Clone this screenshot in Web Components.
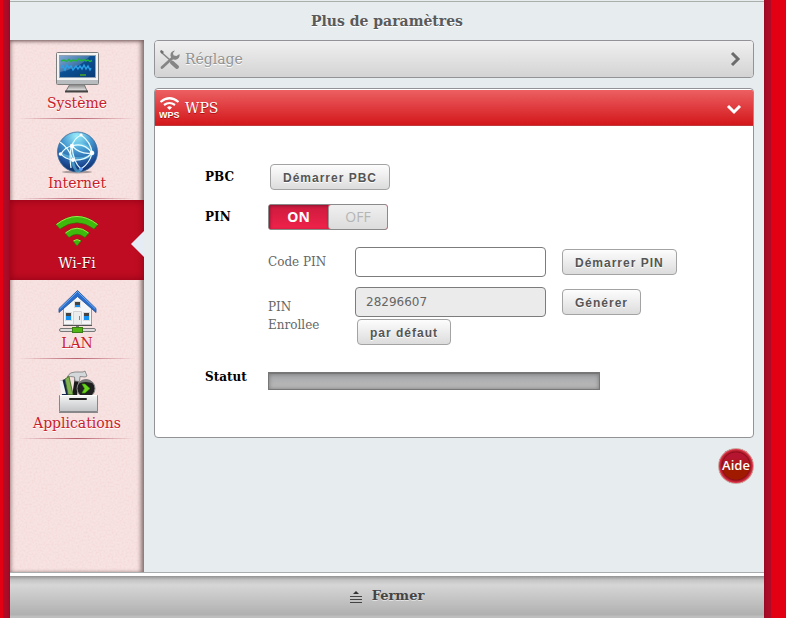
<!DOCTYPE html>
<html lang="fr">
<head>
<meta charset="utf-8">
<title>Plus de paramètres</title>
<style>
html, body { margin: 0; min-height: 100%; }
body { background: #e20012; font-family: "DejaVu Serif", serif; color: #4d4d4d; }
</style>
</head>
<body>
<app-shell>
  <side-nav slot="nav">
    <nav-item label="Système"><svg width="48" height="48" viewBox="0 0 48 48">
      <defs><linearGradient id="scr" x1="0" y1="0" x2="1" y2="1"><stop offset="0" stop-color="#5f93c8"/><stop offset=".45" stop-color="#0b4f92"/><stop offset="1" stop-color="#0a3c78"/></linearGradient>
      <linearGradient id="std" x1="0" y1="0" x2="0" y2="1"><stop offset="0" stop-color="#777"/><stop offset="1" stop-color="#eee"/></linearGradient></defs>
      <path d="M17 36h14l3 7H13z" fill="url(#std)" stroke="#777"/><path d="M12 43.500h23" stroke="#444" stroke-width="2"/>
      <rect x="3.500" y="4.500" width="42" height="32" rx="1" fill="#f4f4f4" stroke="#7d7d7d"/>
      <path d="M4 32h41v4H4z" fill="#b9bcbe"/>
      <rect x="6.500" y="7.500" width="36" height="22" fill="url(#scr)" stroke="#8fa1b3"/>
      <path d="M7 8h30Q27 20 7 24z" fill="#fff" opacity=".22"/>
      <path d="M8 13l3-1 2 1.500 3-2 2 2 2-1.500 3 1 3-2 2 2 3-1.500 2 1.500 2-1 2 1.500 2-1" fill="none" stroke="#21b53a" stroke-width="1.400"/>
      <path d="M8 20l2-2 2 4 2-5 2 3 2-2 2 4 3-4 2 3 2-3 2 3 2-4 2 4 2-3 2 4 1-2" fill="none" stroke="#29a0e8" stroke-width="1.400"/>
      <path d="M27 27h6" stroke="#3a8d3a" stroke-width="2"/></svg></nav-item>
    <nav-item label="Internet"><svg width="48" height="48" viewBox="0 0 48 48">
      <defs><radialGradient id="gl" cx=".48" cy=".1" r=".9"><stop offset="0" stop-color="#9beefa"/><stop offset=".4" stop-color="#479bd2"/><stop offset=".8" stop-color="#1e4e98"/><stop offset="1" stop-color="#0f2c66"/></radialGradient></defs>
      <ellipse cx="24" cy="44" rx="15" ry="1.500" fill="#000" opacity=".3"/>
      <circle cx="24.500" cy="24" r="20" fill="url(#gl)" stroke="#3b6c9c" stroke-width=".8"/>
      <g fill="none" stroke="#6ed8f4" stroke-width="3" opacity=".5"><path d="M19 18Q32 13 40 25Q30 36 8 26"/><path d="M28 7Q15 16 19 32T28 41"/></g>
      <g fill="none" stroke="#e9fcff" stroke-width="1.200"><path d="M19 18Q31 14 39 25Q32 33 20 32Q12 31 8 26"/><path d="M28 7Q14 14 18 40"/><path d="M28 7Q38 14 39 25Q37 35 28 41"/><path d="M19 18Q20 34 28 41"/><path d="M7 14Q16 20 20 32"/><path d="M19 18Q28 27 39 25"/><path d="M19 18Q12 19 8 26"/></g>
      <g fill="#fff"><circle cx="19" cy="18" r="2.200"/><circle cx="39" cy="25" r="2.200"/><circle cx="20" cy="32" r="2"/><circle cx="7.500" cy="26" r="1.800"/><circle cx="28" cy="7" r="1.600"/></g><circle cx="28" cy="41" r="1.800" fill="#67a6ff"/></svg></nav-item>
    <nav-item label="Wi-Fi" active><svg width="48" height="48" viewBox="0 0 48 48">
      <g fill="#3fb90c" stroke="#1f7a05" stroke-width=".6"><path d="M3 16.500Q24 0 45 16.500L41 21Q24 8.500 7 21z"/><path d="M12 25Q24 15 36 25L32 29.500Q24 23 16 29.500z"/><path d="M20 33Q24 30 28 33L24 38z"/></g>
      <g fill="none" stroke="#a2ea4c" stroke-width="1"><path d="M3.500 16.500Q24 .5 44.500 16.500"/><path d="M12.500 24.900Q24 15.500 35.500 24.900"/><path d="M20.500 32.800Q24 30.500 27.500 32.800"/></g></svg></nav-item>
    <nav-item label="LAN"><svg width="48" height="48" viewBox="0 0 48 48">
      <path d="M10.500 20L24.500 6l14 14v17h-28z" fill="#f5f6f7" stroke="#999"/><path d="M10 37.500h29" stroke="#555"/>
      <path d="M6 20.500L24.500 2.500 43 20.500v4L24.500 8.500 6 24.500z" fill="#2b6fce" stroke="#1c4c95" stroke-width=".8"/><path d="M6.500 21L24.500 3.500 42.500 21" fill="none" stroke="#74adef"/>
      <g fill="#444" stroke="#ddd"><path d="M21.500 13.500h6v6h-6z"/><path d="M12.500 24.500h6v8h-6z"/><path d="M30.500 24.500h6v8h-6z"/></g>
      <path d="M22 17h5v2h-5zM13 28h5v4h-5zM31 28h5v4h-5z" fill="#1690f0"/>
      <path d="M20.500 23.500h8v13h-8z" fill="#eceded" stroke="#d2d2d2"/><path d="M26.500 28v4" stroke="#888"/>
      <path d="M24.500 38v3" stroke="#777" stroke-width="3"/>
      <rect x="6.500" y="40.500" width="36" height="3" rx="1.500" fill="#dedede" stroke="#777"/><rect x="19.500" y="39.500" width="10" height="5" fill="#52b516" stroke="#3b7c16"/></svg></nav-item>
    <nav-item label="Applications"><svg width="48" height="48" viewBox="0 0 48 48">
      <defs><linearGradient id="bx" x1="0" y1="0" x2="0" y2="1"><stop offset="0" stop-color="#f4f4f4"/><stop offset="1" stop-color="#c2c4c6"/></linearGradient></defs>
      <path d="M22 9l4 1-2 18h-5z" fill="#1b1b1b"/><path d="M14 9Q17 3.500 22 4h8l2-1 2 5-2 1-5-.5-.5 5-4.500-.5-.5-4q-4-1-7.500 0z" fill="#d5d8da" stroke="#777" stroke-width=".8"/>
      <path d="M7 13l5-2 5 16H9z" fill="#14264a"/><path d="M6.500 13l3-1 3.500 14H8z" fill="#f2f2f2"/>
      <path d="M12 11l4-2.500 4 18h-5z" fill="#7fb250" stroke="#3c6420" stroke-width=".8"/>
      <circle cx="33" cy="20.500" r="9" fill="#202020" stroke="#8b8b8b"/><path d="M25.500 15.500a9 9 0 0 1 15 0q-8-3-15 0z" fill="#777"/>
      <path d="M29 16h3l5 4.500-5 4.500h-3l2.500-4.500z" fill="#69d51c" stroke="#3c9a0c" stroke-width=".6"/>
      <path d="M6.500 27.500h38v16h-38z" fill="url(#bx)" stroke="#85878a"/><path d="M7 27.500h37" stroke="#fff"/><path d="M6 44.500h39" stroke="#888"/>
      <rect x="16" y="30" width="18" height="2" rx="1" fill="#222"/></svg></nav-item>
  </side-nav>
  <fold-panel label="Réglage">
    <svg slot="icon" width="22" height="22" viewBox="0 0 22 22"><g fill="none" stroke="#858585" stroke-linecap="round"><path d="M2 4l9 8" stroke-width="1.600"/><path d="M13 14.500l5 4.500" stroke-width="4"/><path d="M3 19.500L14.500 9" stroke-width="2.800"/></g><path d="M20.500 6a4.600 4.600 0 1 1-4.500-3.500l-2 2.500.5 2.500 3 .5z" fill="#858585"/><path d="M1 3l1.500-1 2.500 2-2 2z" fill="#6f6f6f"/></svg>
  </fold-panel>
  <fold-panel label="WPS" open>
    <svg slot="icon" width="22" height="24" viewBox="0 0 22 24"><g fill="none" stroke="#fff" stroke-width="2.200"><path d="M1.500 6Q10.500 -1.500 19.500 6"/><path d="M5 9Q10.500 5 16 9"/></g><path d="M8 11.500Q10.500 9 13 11.500L10.500 14z" fill="#fff"/><text x="0" y="22" fill="#fff" font-family="Liberation Sans, sans-serif" font-weight="700" font-size="9">WPS</text></svg>
    <wps-form></wps-form>
  </fold-panel>
  <help-link></help-link>
</app-shell>
<script>
const define = (name, html, setup) => customElements.define(name, class extends HTMLElement {
  constructor() {
    super();
    this.attachShadow({ mode: "open" }).innerHTML = html;
  }
  connectedCallback() { if (setup) setup(this, this.shadowRoot); }
});

define("app-shell", `<style>
:host { display: grid; grid-template-rows: 40px 1fr auto; min-height: 100vh; box-sizing: border-box; margin: 0 22px 0 10px; background: #e7ecef; box-shadow: 0 0 3px 0 #7c0a20, 0 0 0 7px #ac0c28; clip-path: inset(0 -7px); }
header { border-top: 1px solid #a9b0ac; margin-top: 1px; display: flex; justify-content: center; align-items: center; }
h1 { margin: 0; font-size: 14px; line-height: 20px; font-weight: 700; color: #5a5a5a; text-shadow: 0 1px #fff; }
.body { display: grid; grid-template-columns: 134px 1fr; }
main { padding: 0 10px; display: flex; flex-direction: column; gap: 10px; }
</style>
<header><h1>Plus de paramètres</h1></header>
<div class="body"><slot name="nav"></slot><main><slot></slot></main></div>
<close-bar></close-bar>`);

define("side-nav", `<style>
:host { display: block; position: relative; background: #f7e3e2 url("data:image/svg+xml,%3Csvg xmlns='http://www.w3.org/2000/svg' width='120' height='120'%3E%3Cfilter id='n'%3E%3CfeTurbulence type='fractalNoise' baseFrequency='.5' numOctaves='2' stitchTiles='stitch'/%3E%3CfeColorMatrix values='0 0 0 0 .85 0 0 0 0 .55 0 0 0 0 .55 1.2 0 0 0 -.45'/%3E%3C/filter%3E%3Crect width='120' height='120' filter='url(%23n)' opacity='.55'/%3E%3C/svg%3E"); }
nav { min-height: 100%; box-shadow: inset 0 3px 4px -2px #7a5f5f, inset -4px 0 4px -1px #8a7474, inset 3px 0 4px -2px #a58a8a; }
</style><nav><slot></slot></nav>`);

define("nav-item", `<style>
:host { display: block; }
a { position: relative; display: flex; flex-direction: column; align-items: center; height: 80px; box-sizing: border-box; padding-top: 8px; color: #c8202b; text-decoration: none; font-size: 14px; line-height: 18px; text-shadow: 0 1px #fff; }
a::after { content: ""; position: absolute; left: 8px; right: 8px; bottom: 1px; height: 1px; background: linear-gradient(90deg, transparent, #b9606f, transparent); }
slot { display: block; height: 46px; }
:host([active]) a { background: #bf0c22; color: #fff; text-shadow: 0 1px #500; box-shadow: inset 0 0 8px #8a0014; }
:host([active]) a::after { left: auto; right: 0; top: 31px; width: 13px; height: 26px; background: #e6ecf5; clip-path: polygon(100% 0, 0 50%, 100% 100%); }
</style><a href="#"><slot></slot><span></span></a>`, (host, root) => {
  root.querySelector("span").textContent = host.getAttribute("label");
  if (host.hasAttribute("active")) root.querySelector("a").setAttribute("aria-current", "page");
});

define("fold-panel", `<style>
:host { display: block; border: 1px solid #939397; border-radius: 4px; overflow: hidden; background: #fff; }
button { display: flex; align-items: center; gap: 4px; width: 100%; height: 36px; padding: 0 12px 0 4px; border: 0; background: linear-gradient(#f0f0f0, #d3d3d3); color: #929292; font: 14px/20px "DejaVu Serif", serif; text-shadow: 0 1px #fff; text-align: left; }
span { flex: 1; }
.chev { fill: none; stroke: #6b6b6b; stroke-width: 3; }
:host([open]) button { background: linear-gradient(#ec6062, #d3171b); color: #fff; text-shadow: 0 1px #a11; border-bottom: 1px solid #c0383c; margin-top: 1px; }
:host([open]) .chev { stroke: #fff; transform: rotate(90deg); }
</style><button type="button"><slot name="icon"></slot><span></span><svg class="chev" width="14" height="16" viewBox="0 0 14 16"><path d="M5 2l6 6-6 6"/></svg></button><slot></slot>`, (host, root) => {
  root.querySelector("span").textContent = host.getAttribute("label");
  root.querySelector("button").setAttribute("aria-expanded", host.hasAttribute("open"));
});

define("push-button", `<style>
:host { display: inline-block; }
button { height: 26px; padding: 2px 12px 0; border: 1px solid #a3a3a3; border-radius: 4px; background: linear-gradient(#fdfdfd, #dcdcdc); color: #555; font: 700 12px/18px "Liberation Sans", Arial, sans-serif; letter-spacing: 1px; text-shadow: 0 1px #fff; white-space: nowrap; }
</style><button type="button"><slot></slot></button>`);

define("on-off", `<style>
:host { display: block; width: 120px; }
label { position: relative; display: grid; grid-template-columns: 1fr 1fr; height: 26px; box-sizing: border-box; border: 1px solid #8a8a8a; border-radius: 3px; overflow: hidden; font: 14px/24px "Open Sans", sans-serif; text-align: center; background: #e8204a; }
input { position: absolute; inset: 0; width: 100%; height: 100%; margin: 0; opacity: 0; }
.on { color: #fff; font-weight: 700; background: linear-gradient(#cc1a3d, #f0224b); box-shadow: inset 1px 1px 3px #8d1430; }
.off { color: #b5b5b5; background: linear-gradient(#f0f0f0, #dcdcdc); border-left: 1px solid #999; border-radius: 3px 0 0 3px; }
</style><label><input type="checkbox" role="switch" checked aria-label="PIN"><span class="on">ON</span><span class="off">OFF</span></label>`);

define("wps-form", `<style>
:host { display: block; padding: 38px 50px 47px; font-size: 12px; line-height: 18px; }
.row { display: grid; grid-template-columns: 63px 1fr; }
.pbc { margin-bottom: 14px; }
.pin { margin-bottom: 17px; }
.pair { display: flex; gap: 10px 16px; margin: 0 0 10px 63px; align-items: center; }
.sub { width: 60px; margin-right: 11px; color: #666; }
.code .sub { white-space: nowrap; }
.title { font-weight: 700; color: #000; align-self: center; }
.stack { display: flex; flex-direction: column; align-items: flex-start; gap: 2px; }
.line { display: flex; gap: 16px; align-items: center; }
push-button.indent { margin-left: 2px; }
input { box-sizing: border-box; width: 191px; height: 30px; padding: 0 10px; border: 1px solid #7c7c7c; border-radius: 4px; background: #fff; color: #666; font: 12px/18px "DejaVu Sans", sans-serif; }
input[readonly] { background: #ebebeb; }
.bar { width: 332px; height: 18px; margin-top: 4px; box-sizing: border-box; border: 1px solid #777; border-top-width: 2px; background: linear-gradient(#a5a7a9, #bcbcbc); box-shadow: inset 0 0 4px #777; }
.state { margin-top: 23px; }
.state .title { align-self: start; }
</style>
<form>
<div class="row pbc"><span class="title">PBC</span><push-button class="indent">Démarrer PBC</push-button></div>
<div class="row pin"><span class="title">PIN</span><on-off></on-off></div>
<div class="pair code"><label class="sub" for="code">Code PIN</label><input id="code" type="text"><push-button>Démarrer PIN</push-button></div>
<div class="pair"><label class="sub" for="enr">PIN Enrollee</label><div class="stack"><div class="line"><input id="enr" type="text" value="28296607" readonly><push-button>Générer</push-button></div><push-button class="indent">par défaut</push-button></div></div>
<div class="row state"><span class="title" id="st">Statut</span><div class="bar" role="progressbar" aria-labelledby="st"></div></div>
</form>`);

define("help-link", `<style>
:host { display: block; align-self: flex-end; }
a { display: block; width: 36px; height: 36px; box-sizing: border-box; border-radius: 50%; border: 1px solid #c9a9a0; background: radial-gradient(circle closest-side, transparent 78%, #8e0c18 82%, #e0344a 98%), linear-gradient(#b51530 25%, #a01a00 60%); color: #fff; font: 600 13px/32px "Open Sans", sans-serif; text-align: center; text-decoration: none; white-space: nowrap; }
</style><a href="#">Aide</a>`);

define("close-bar", `<style>
:host { display: block; border-top: 1px solid #a9adae; background: #fff; padding-top: 3px; }
button { display: flex; justify-content: center; align-items: center; gap: 10px; width: 100%; height: 42px; padding: 0 0 2px; border: 0; background: linear-gradient(#929292, #c4c4c4 4px, #d6d6d6 9px, #b0b0b0 39px, #bebebe 40px); color: #444; font: 700 13px/20px "DejaVu Serif", serif; text-shadow: 0 1px #e2e2e2; }
svg { margin-top: 2px; }
</style><button type="button"><svg width="12" height="13" viewBox="0 0 12 13"><path d="M6 0l3 3H3z" fill="#333"/><path d="M0 5.500h12M0 8.500h12M0 11.500h12" stroke="#444"/></svg><span>Fermer</span></button>`);
</script>
</body>
</html>
